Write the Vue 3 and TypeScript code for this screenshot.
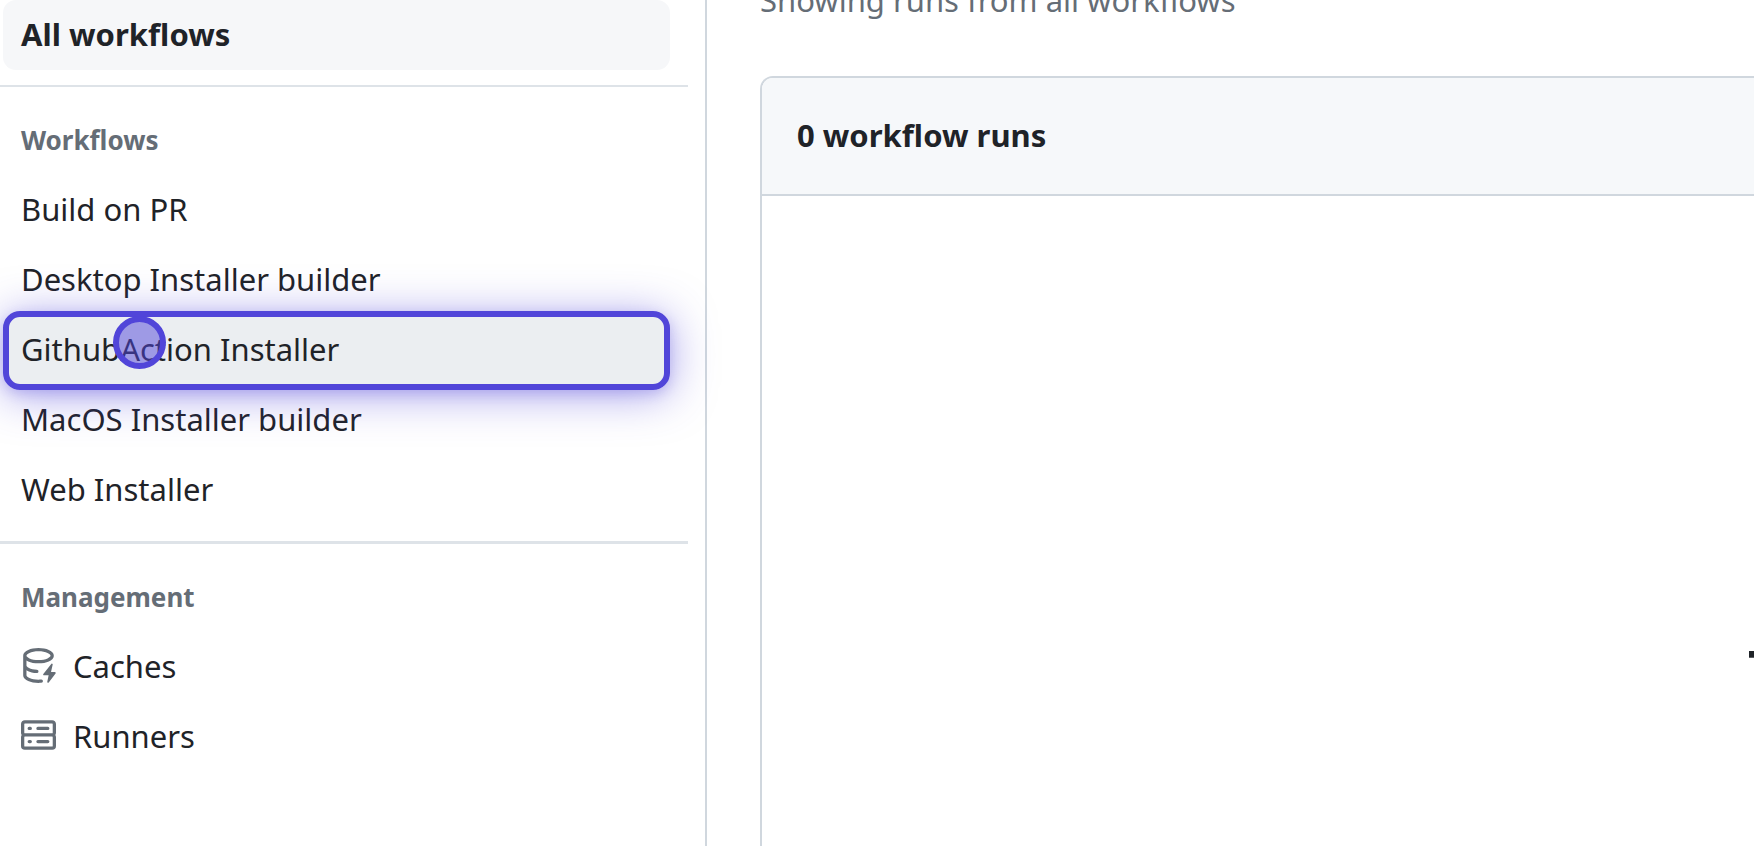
<script setup lang="ts">
import { ref } from 'vue'

interface Workflow {
  id: string
  name: string
}

const workflows: Workflow[] = [
  { id: 'build-pr', name: 'Build on PR' },
  { id: 'desktop', name: 'Desktop Installer builder' },
  { id: 'github-action', name: 'GithubAction Installer' },
  { id: 'macos', name: 'MacOS Installer builder' },
  { id: 'web', name: 'Web Installer' },
]

const highlighted = ref<string>('github-action')
</script>

<template>
  <div class="page">
    <nav class="sidebar" aria-label="Actions">
      <ul class="list">
        <li><a class="row current" href="#all" aria-current="page">All workflows</a></li>
      </ul>
      <section class="group first">
        <h2 class="group-title">Workflows</h2>
        <ul class="list">
          <li v-for="w in workflows" :key="w.id" class="item">
            <a class="row" :class="{ hovered: w.id === highlighted }" :href="'#' + w.id">{{ w.name }}</a>
            <span v-if="w.id === highlighted" class="spotlight" aria-hidden="true">
              <span class="pointer"></span>
            </span>
          </li>
        </ul>
      </section>
      <section class="group second">
        <h2 class="group-title">Management</h2>
        <ul class="list">
          <li>
            <a class="row" href="#caches">
              <svg class="icon" viewBox="0 0 16 16" fill="currentColor" aria-hidden="true">
                <path d="M2.5 5.724V8c0 .248.238.7 1.169 1.159.874.43 2.144.745 3.62.822a.75.75 0 1 1-.078 1.498c-1.622-.085-3.102-.432-4.204-.975a5.565 5.565 0 0 1-.507-.28V12.5c0 .133.058.318.282.551.227.237.591.483 1.101.707 1.015.447 2.47.742 4.117.742.406 0 .802-.018 1.183-.052a.751.751 0 1 1 .134 1.494C8.89 15.98 8.45 16 8 16c-1.805 0-3.475-.32-4.721-.869-.623-.274-1.173-.619-1.579-1.041-.408-.425-.7-.964-.7-1.59v-9c0-.626.292-1.165.7-1.591.406-.42.956-.766 1.579-1.04C4.525.32 6.195 0 8 0c1.806 0 3.476.32 4.721.869.623.274 1.173.619 1.579 1.041.408.425.7.964.7 1.59 0 .626-.292 1.165-.7 1.591-.406.42-.956.766-1.578 1.04C11.475 6.68 9.805 7 8 7c-1.805 0-3.475-.32-4.721-.869a6.15 6.15 0 0 1-.779-.407Zm0-2.224c0 .133.058.318.282.551.227.237.591.483 1.101.707C4.898 5.205 6.353 5.5 8 5.5c1.646 0 3.101-.295 4.118-.742.508-.224.873-.471 1.1-.708.224-.232.282-.417.282-.55 0-.133-.058-.318-.282-.551-.227-.237-.591-.483-1.101-.707C11.102 1.795 9.647 1.5 8 1.5c-1.646 0-3.101.295-4.118.742-.508.224-.873.471-1.1.708-.224.232-.282.417-.282.55Z" />
                <path d="M14.49 7.582a.375.375 0 0 0-.66-.313l-3.625 4.625a.375.375 0 0 0 .295.606h2.127l-.619 2.922a.375.375 0 0 0 .666.304l3.125-4.125A.375.375 0 0 0 15.5 11h-1.778l.769-3.418Z" />
              </svg>
              Caches
            </a>
          </li>
          <li>
            <a class="row" href="#runners">
              <svg class="icon" viewBox="0 0 16 16" fill="currentColor" aria-hidden="true">
                <path d="M1.75 1h12.5c.966 0 1.75.784 1.75 1.75v4c0 .372-.116.717-.314 1 .198.283.314.628.314 1v4a1.75 1.75 0 0 1-1.75 1.75H1.75A1.75 1.75 0 0 1 0 12.75v-4c0-.358.109-.707.314-1a1.739 1.739 0 0 1-.314-1v-4C0 1.784.784 1 1.75 1ZM1.5 2.75v4c0 .138.112.25.25.25h12.5a.25.25 0 0 0 .25-.25v-4a.25.25 0 0 0-.25-.25H1.75a.25.25 0 0 0-.25.25Zm.25 5.75a.25.25 0 0 0-.25.25v4c0 .138.112.25.25.25h12.5a.25.25 0 0 0 .25-.25v-4a.25.25 0 0 0-.25-.25ZM7 4.75A.75.75 0 0 1 7.75 4h4.5a.75.75 0 0 1 0 1.5h-4.5A.75.75 0 0 1 7 4.75ZM7.75 10h4.5a.75.75 0 0 1 0 1.5h-4.5a.75.75 0 0 1 0-1.5ZM3 4.75A.75.75 0 0 1 3.75 4h.5a.75.75 0 0 1 0 1.5h-.5A.75.75 0 0 1 3 4.75ZM3.75 10h.5a.75.75 0 0 1 0 1.5h-.5a.75.75 0 0 1 0-1.5Z" />
              </svg>
              Runners
            </a>
          </li>
        </ul>
      </section>
    </nav>
    <main class="content">
      <p class="subtitle">Showing runs from all workflows</p>
      <section class="panel">
        <header class="panel-head">0 workflow runs</header>
        <div class="empty">
          <h3 class="empty-title">There are no workflow runs yet.</h3>
        </div>
      </section>
    </main>
  </div>
</template>

<style>
body {
  margin: 0;
  background: #fff;
}
</style>

<style scoped>
.page {
  display: grid;
  grid-template-columns: 707px minmax(0, 1fr);
  height: 100vh;
  overflow: hidden;
  font-family: "Noto Sans", sans-serif;
  font-size: 31px;
  line-height: 42px;
  color: #1f2328;
}
.sidebar {
  position: relative;
  z-index: 1;
  box-sizing: border-box;
  padding-right: 17px;
  border-right: 2px solid #d0d7de;
}
.list {
  margin: 0;
  padding: 0 18px 0 3px;
  list-style: none;
}
.item {
  position: relative;
}
.row {
  display: flex;
  align-items: center;
  gap: 17px;
  height: 70px;
  box-sizing: border-box;
  padding: 0 18px 3px;
  border-radius: 13px;
  color: inherit;
  text-decoration: none;
}
.row.current {
  background: #f6f7f9;
  font-weight: 700;
}
.row.hovered {
  background: #ebeef1;
}
.group {
  border-top: 2px solid #dee3e8;
}
.group.first {
  margin-top: 15px;
}
.group.second {
  margin-top: 16px;
  border-top-width: 3px;
}
.group-title {
  margin: 0;
  padding: 35px 21px 17px;
  font-size: 26px;
  line-height: 36px;
  font-weight: 700;
  color: #656d76;
}
.icon {
  flex: none;
  width: 35px;
  height: 35px;
  color: #656d76;
}
.spotlight {
  position: absolute;
  inset: -4px 0 -5px;
  z-index: 2;
  box-sizing: border-box;
  border: 6px solid #5145d9;
  border-radius: 17px;
  box-shadow: 0 5px 44px rgba(80, 67, 217, 0.5), 0 4px 12px rgba(80, 67, 217, 0.2);
  pointer-events: none;
}
.pointer {
  position: absolute;
  top: -1px;
  left: 104px;
  box-sizing: border-box;
  width: 53px;
  height: 53px;
  border: 6px solid #5145d9;
  border-radius: 50%;
  background: rgba(81, 69, 217, 0.5);
}
.content {
  display: flex;
  flex-direction: column;
  padding-left: 53px;
}
.subtitle {
  margin: -21px 0 55px;
  color: #656d76;
}
.panel {
  flex: 1;
  border: 2px solid #d0d7de;
  border-width: 2px 0 0 2px;
  border-radius: 13px 0 0 0;
}
.panel-head {
  padding: 36px 35px 38px;
  border-bottom: 2px solid #d0d7de;
  border-radius: 11px 0 0 0;
  background: #f6f8fa;
  font-weight: 700;
}
.empty {
  padding: 438px 0 0 calc(100% - 6px);
}
.empty-title {
  margin: 0;
  font-size: 53px;
  line-height: 72px;
  font-weight: 700;
  white-space: nowrap;
}
</style>
